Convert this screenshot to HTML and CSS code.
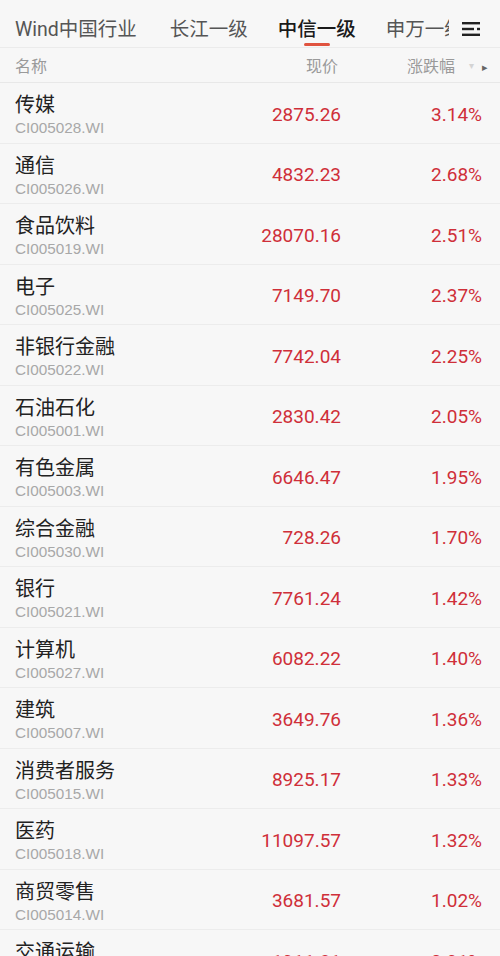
FILE: index.html
```html
<!DOCTYPE html>
<html lang="zh-CN">
	<head>
		<title>行业指数</title>
		<meta charset="utf-8">
		<meta name="viewport" content="width=device-width, user-scalable=no, minimum-scale=1.0, maximum-scale=1.0">
		<link rel="stylesheet" href="styles.css">
	</head>
	<body>
		<div class="tabbar">
			<div class="tabs">
				<span class="tab">Wind中国行业</span>
				<span class="tab">长江一级</span>
				<span class="tab active">中信一级</span>
				<span class="tab">申万一级</span>
			</div>
			<div class="menu">
				<svg width="18" height="14" viewBox="0 0 18 14">
					<rect x="0" y="0" width="18" height="2.4" fill="#222"/>
					<rect x="0" y="5.8" width="12" height="2.4" fill="#222"/>
					<rect x="15" y="5.8" width="3" height="2.4" fill="#222"/>
					<rect x="0" y="11.6" width="18" height="2.4" fill="#222"/>
				</svg>
			</div>
		</div>

		<div class="head">
			<span>名称</span>
			<span class="col-price">现价</span>
			<span class="col-pct">涨跌幅<i class="sort">&#9662;</i><i class="more">&#9656;</i></span>
		</div>

		<div class="list">
			<div class="row"><div class="name">传媒<small>CI005028.WI</small></div><span class="price">2875.26</span><span class="pct">3.14%</span></div>
			<div class="row"><div class="name">通信<small>CI005026.WI</small></div><span class="price">4832.23</span><span class="pct">2.68%</span></div>
			<div class="row"><div class="name">食品饮料<small>CI005019.WI</small></div><span class="price">28070.16</span><span class="pct">2.51%</span></div>
			<div class="row"><div class="name">电子<small>CI005025.WI</small></div><span class="price">7149.70</span><span class="pct">2.37%</span></div>
			<div class="row"><div class="name">非银行金融<small>CI005022.WI</small></div><span class="price">7742.04</span><span class="pct">2.25%</span></div>
			<div class="row"><div class="name">石油石化<small>CI005001.WI</small></div><span class="price">2830.42</span><span class="pct">2.05%</span></div>
			<div class="row"><div class="name">有色金属<small>CI005003.WI</small></div><span class="price">6646.47</span><span class="pct">1.95%</span></div>
			<div class="row"><div class="name">综合金融<small>CI005030.WI</small></div><span class="price">728.26</span><span class="pct">1.70%</span></div>
			<div class="row"><div class="name">银行<small>CI005021.WI</small></div><span class="price">7761.24</span><span class="pct">1.42%</span></div>
			<div class="row"><div class="name">计算机<small>CI005027.WI</small></div><span class="price">6082.22</span><span class="pct">1.40%</span></div>
			<div class="row"><div class="name">建筑<small>CI005007.WI</small></div><span class="price">3649.76</span><span class="pct">1.36%</span></div>
			<div class="row"><div class="name">消费者服务<small>CI005015.WI</small></div><span class="price">8925.17</span><span class="pct">1.33%</span></div>
			<div class="row"><div class="name">医药<small>CI005018.WI</small></div><span class="price">11097.57</span><span class="pct">1.32%</span></div>
			<div class="row"><div class="name">商贸零售<small>CI005014.WI</small></div><span class="price">3681.57</span><span class="pct">1.02%</span></div>
			<div class="row"><div class="name">交通运输<small>CI005011.WI</small></div><span class="price">1911.81</span><span class="pct">0.91%</span></div>
		</div>
	</body>
</html>
```

FILE: styles.css
```css
body {
	margin: 0;
	background-color: #f7f7f7;
	font-family: Roboto, "Noto Sans CJK SC", sans-serif;
	color: #222;
	height: 956px;
	overflow: hidden;
}

/* tabs */

.tabbar {
	display: flex;
	height: 48px;
	border-bottom: 1px solid #ebebeb;
	box-sizing: border-box;
}

.tabs {
	display: flex;
	width: 449px;
	overflow: hidden;
	white-space: nowrap;
	padding-left: 15px;
	box-sizing: border-box;
}

.tab {
	position: relative;
	font-size: 19.5px;
	line-height: 24px;
	height: 48px;
	padding-top: 18px;
	margin-right: 30px;
	color: #555;
	box-sizing: border-box;
}

.tab:first-child {
	margin-right: 33px;
}

.tab.active {
	color: #1a1a1a;
	font-weight: 500;
}

.tab.active::after {
	content: "";
	position: absolute;
	left: 50%;
	bottom: 2px;
	width: 26px;
	height: 3px;
	margin-left: -13px;
	border-radius: 2px;
	background: #e0533f;
}

.menu {
	padding-left: 13px;
	padding-top: 22px;
}

.menu svg {
	display: block;
}

/* header */

.head {
	display: grid;
	grid-template-columns: 1fr 140px 147px;
	align-items: center;
	height: 35px;
	padding: 0 12px 0 15px;
	border-bottom: 1px solid #e8e8e8;
	font-size: 16px;
	color: #9a9a9a;
	box-sizing: border-box;
}

.col-price {
	text-align: right;
	padding-right: 3px;
}

.col-pct {
	display: flex;
	justify-content: flex-end;
	align-items: center;
}

.col-pct i {
	font-style: normal;
}

.sort {
	font-size: 10px;
	color: #d4d4d4;
	margin-left: 14px;
}

.more {
	font-size: 11px;
	color: #666;
	margin-left: 8px;
	margin-top: 4px;
}

/* rows */

.row {
	display: grid;
	grid-template-columns: 1fr 140px 141px;
	align-items: center;
	height: 60.5px;
	padding: 0 18px 0 15px;
	border-bottom: 1px solid #ececec;
	box-sizing: border-box;
}

.name {
	font-size: 20px;
	line-height: 26px;
	color: #222;
	padding-top: 5px;
}

.name small {
	display: block;
	font-family: "Liberation Sans", "Noto Sans CJK SC", sans-serif;
	font-size: 15.3px;
	line-height: 20px;
	color: #a8a8a8;
}

.price,
.pct {
	text-align: right;
	font-size: 19px;
	color: #cf2f39;
	padding-top: 3px;
}
```
